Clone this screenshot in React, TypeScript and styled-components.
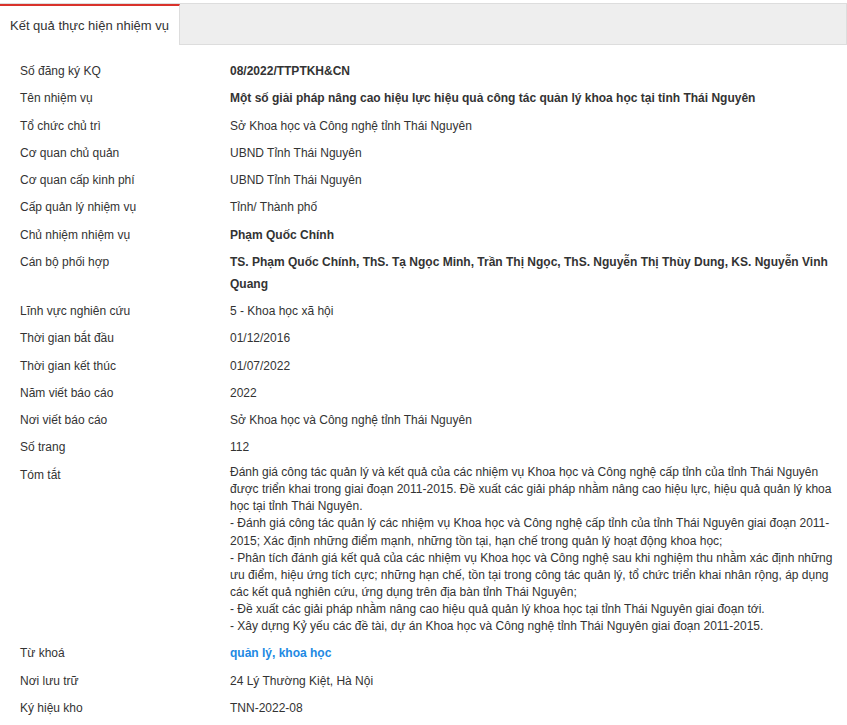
import styled, { createGlobalStyle } from "styled-components";

const GlobalStyle = createGlobalStyle`
  html, body {
    margin: 0;
    padding: 0;
    background: #fff;
  }
  body {
    font-family: "Liberation Sans", Arial, sans-serif;
    font-size: 12px;
    color: #333;
  }
`;

const Panel = styled.div`
  margin-top: 3px;
`;

const TabBar = styled.div`
  display: flex;
  height: 40px;
  background: #eee;
  border-top: 1px solid #ddd;
  border-bottom: 1px solid #ddd;
  border-right: 1px solid #ddd;
`;

const Tab = styled.div<{ $active?: boolean }>`
  display: flex;
  align-items: center;
  padding: 0 10px;
  background: ${(p) => (p.$active ? "#fff" : "transparent")};
  border-top: 2px solid ${(p) => (p.$active ? "#d9322b" : "transparent")};
  border-right: 1px solid #ddd;
  color: #333;
  font-size: 13px;
  margin-bottom: -1px;
  padding-bottom: 1px;
`;

const Content = styled.div`
  padding: 12.4px 8px 0 20px;
`;

const Row = styled.div`
  display: grid;
  grid-template-columns: 210px 1fr;
  padding: 2.63px 0;
  line-height: 22px;
`;

const Label = styled.div`
  color: #333;
`;

const Value = styled.div<{ $bold?: boolean; $link?: boolean }>`
  font-weight: ${(p) => (p.$bold || p.$link ? 700 : 400)};
  color: ${(p) => (p.$link ? "#2189e3" : "#333")};
`;

const Summary = styled.div`
  line-height: 17.15px;
  padding: 0.5px 0 1.6px;
`;

type Field = { label: string; value: string; bold?: boolean; link?: boolean };

const before: Field[] = [
  { label: "Số đăng ký KQ", value: "08/2022/TTPTKH&CN", bold: true },
  {
    label: "Tên nhiệm vụ",
    value:
      "Một số giải pháp nâng cao hiệu lực hiệu quả công tác quản lý khoa học tại tỉnh Thái Nguyên",
    bold: true,
  },
  { label: "Tổ chức chủ trì", value: "Sở Khoa học và Công nghệ tỉnh Thái Nguyên" },
  { label: "Cơ quan chủ quản", value: "UBND Tỉnh Thái Nguyên" },
  { label: "Cơ quan cấp kinh phí", value: "UBND Tỉnh Thái Nguyên" },
  { label: "Cấp quản lý nhiệm vụ", value: "Tỉnh/ Thành phố" },
  { label: "Chủ nhiệm nhiệm vụ", value: "Phạm Quốc Chính", bold: true },
  {
    label: "Cán bộ phối hợp",
    value:
      "TS. Phạm Quốc Chính, ThS. Tạ Ngọc Minh, Trần Thị Ngọc, ThS. Nguyễn Thị Thùy Dung, KS. Nguyễn Vinh Quang",
    bold: true,
  },
  { label: "Lĩnh vực nghiên cứu", value: "5 - Khoa học xã hội" },
  { label: "Thời gian bắt đầu", value: "01/12/2016" },
  { label: "Thời gian kết thúc", value: "01/07/2022" },
  { label: "Năm viết báo cáo", value: "2022" },
  { label: "Nơi viết báo cáo", value: "Sở Khoa học và Công nghệ tỉnh Thái Nguyên" },
  { label: "Số trang", value: "112" },
];

const summary = [
  "Đánh giá công tác quản lý và kết quả của các nhiệm vụ Khoa học và Công nghệ cấp tỉnh của tỉnh Thái Nguyên được triển khai trong giai đoạn 2011-2015. Đề xuất các giải pháp nhằm nâng cao hiệu lực, hiệu quả quản lý khoa học tại tỉnh Thái Nguyên.",
  "- Đánh giá công tác quản lý các nhiệm vụ Khoa học và Công nghệ cấp tỉnh của tỉnh Thái Nguyên giai đoạn 2011-2015; Xác định những điểm mạnh, những tồn tại, hạn chế trong quản lý hoạt động khoa học;",
  "- Phân tích đánh giá kết quả của các nhiệm vụ Khoa học và Công nghệ sau khi nghiệm thu nhằm xác định những ưu điểm, hiệu ứng tích cực; những hạn chế, tồn tại trong công tác quản lý, tổ chức triển khai nhân rộng, áp dụng các kết quả nghiên cứu, ứng dụng trên địa bàn tỉnh Thái Nguyên;",
  "- Đề xuất các giải pháp nhằm nâng cao hiệu quả quản lý khoa học tại tỉnh Thái Nguyên giai đoạn tới.",
  "- Xây dựng Kỷ yếu các đề tài, dự án Khoa học và Công nghệ tỉnh Thái Nguyên giai đoạn 2011-2015.",
];

const after: Field[] = [
  { label: "Từ khoá", value: "quản lý, khoa học", link: true },
  { label: "Nơi lưu trữ", value: "24 Lý Thường Kiệt, Hà Nội" },
  { label: "Ký hiệu kho", value: "TNN-2022-08" },
];

const FieldRow = ({ label, value, bold, link }: Field) => (
  <Row>
    <Label>{label}</Label>
    <Value $bold={bold} $link={link}>
      {value}
    </Value>
  </Row>
);

const App = () => {
  return (
    <>
      <GlobalStyle />
      <Panel>
        <TabBar>
          <Tab $active>Kết quả thực hiện nhiệm vụ</Tab>
        </TabBar>
        <Content>
          {before.map((f) => (
            <FieldRow key={f.label} {...f} />
          ))}
          <Row>
            <Label>Tóm tắt</Label>
            <Summary>
              {summary.map((line, i) => (
                <span key={i}>
                  {i > 0 && <br />}
                  {line}
                </span>
              ))}
            </Summary>
          </Row>
          {after.map((f) => (
            <FieldRow key={f.label} {...f} />
          ))}
        </Content>
      </Panel>
    </>
  );
};

export default App;
